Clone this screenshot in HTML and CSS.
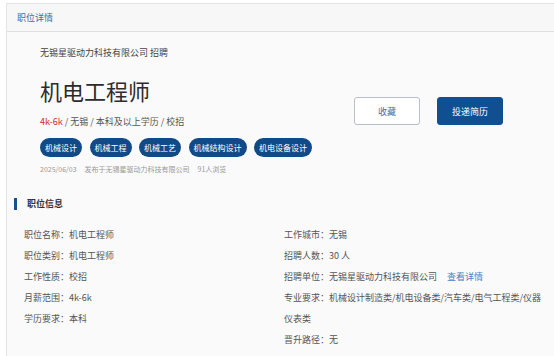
FILE: index.html
```html
<html>
<head>
    <meta charset="utf-8">
    <title>职位详情</title>
    <link rel="stylesheet" href="styles.css">
</head>
<body>
<div class="card">
    <div class="card-head">职位详情</div>
    <div class="job-top">
        <div class="job-main">
            <div class="company">无锡星驱动力科技有限公司 招聘</div>
            <h1 class="title">机电工程师</h1>
            <div class="summary"><span class="salary">4k-6k</span> / 无锡 / 本科及以上学历 / 校招</div>
            <div class="tags">
                <span class="tag">机械设计</span>
                <span class="tag">机械工程</span>
                <span class="tag">机械工艺</span>
                <span class="tag">机械结构设计</span>
                <span class="tag">机电设备设计</span>
            </div>
            <div class="meta">
                <span>2025/06/03</span>
                <span>发布于无锡星驱动力科技有限公司</span>
                <span>91人浏览</span>
            </div>
        </div>
        <div class="actions">
            <button class="btn btn-line">收藏</button>
            <button class="btn btn-solid">投递简历</button>
        </div>
    </div>
    <div class="section-head">职位信息</div>
    <div class="info">
        <div class="info-col">
            <div class="row">职位名称：机电工程师</div>
            <div class="row">职位类别：机电工程师</div>
            <div class="row">工作性质：校招</div>
            <div class="row">月薪范围：4k-6k</div>
            <div class="row">学历要求：本科</div>
        </div>
        <div class="info-col">
            <div class="row">工作城市：无锡</div>
            <div class="row">招聘人数：30 人</div>
            <div class="row">招聘单位：无锡星驱动力科技有限公司 <a class="link" href="#">查看详情</a></div>
            <div class="row">专业要求：机械设计制造类/机电设备类/汽车类/电气工程类/仪器仪表类</div>
            <div class="row">晋升路径：无</div>
        </div>
    </div>
</div>
</body>
</html>
```

FILE: styles.css
```css
body {margin:0; padding:3px 0 0 6px; background:#fff; font-family:"Noto Sans CJK SC", "Noto Sans", sans-serif; color:#444; overflow:hidden;}
.card {border:1px solid #e4e4e4; border-right:none; border-bottom:none; background:#fafafa; height:352px; overflow:hidden;}
.card-head {height:27px; line-height:27px; padding-left:10px; font-size:9px; color:#3f6ea6; background:#f7f7f7; border-bottom:1px solid #e0e0e0;}
.job-top {display:flex; justify-content:space-between; padding:13px 51px 0 33px;}
.company {font-size:9px; line-height:16px; color:#444;}
.title {margin:13px 0 0; font-size:22px; line-height:32px; font-weight:normal; color:#2c2c2c;}
.summary {margin-top:8px; font-size:9px; line-height:16px; color:#555;}
.salary {color:#d9262a;}
.tags {display:flex; gap:7.5px; margin-top:8px;}
.tag {height:19px; line-height:19px; padding:0 5px; border-radius:10px; background:#124a87; color:#fff; font-size:8px;}
.meta {margin-top:6px; font-size:7px; line-height:12px; color:#999; display:flex; gap:8px;}
.actions {display:flex; gap:17px; padding-top:52px;}
.btn {width:66px; height:28px; border-radius:3px; font-family:inherit; font-size:9px;}
.btn-line {background:#fff; border:1px solid #b7bfca; color:#3f6ea6;}
.btn-solid {background:#0f4f92; border:1px solid #0f4f92; color:#fff;}
.section-head {margin:23px 0 0 7px; padding-left:10px; border-left:3px solid #1d4f8c; font-size:9px; font-weight:bold; line-height:12px; color:#333;}
.info {display:grid; grid-template-columns:260px 1fr; padding:14px 10px 0 17px; font-size:9px; color:#555;}
.row {line-height:21px;}
.link {color:#4a80c4; text-decoration:none; margin-left:8px;}
```
